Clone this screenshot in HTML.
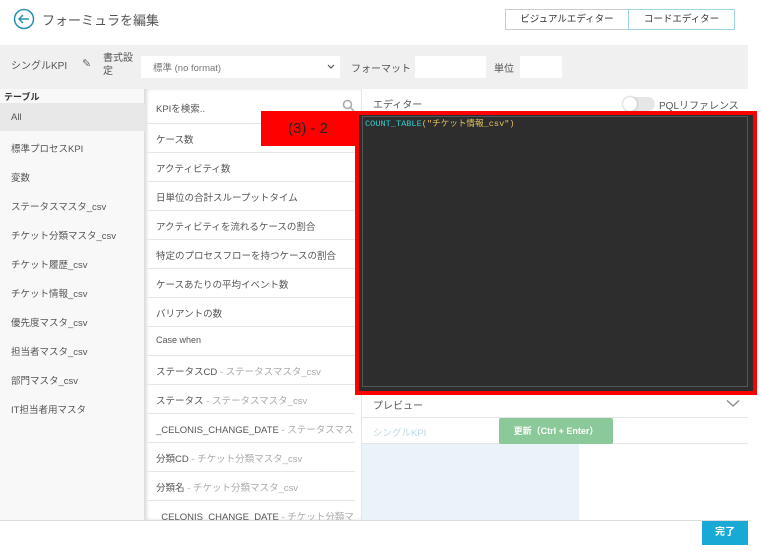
<!DOCTYPE html>
<html><head><meta charset="utf-8"><style>
*{box-sizing:border-box;margin:0;padding:0}
body{width:761px;height:553px;background:#fff;font-family:"Liberation Sans","Noto Sans CJK JP",sans-serif;color:#555;position:relative;overflow:hidden;font-size:10px}
.a{position:absolute}
.li{position:absolute;left:11px;font-size:9.5px;color:#555}
.mr{position:absolute;left:145px;width:210px;height:29px;border-bottom:1px solid #e6e6e6;padding:8px 0 0 11px;font-size:9.5px;color:#555;white-space:nowrap;overflow:hidden}
.mr span{color:#aaa}
</style></head><body>
<svg class="a" style="left:13px;top:8px" width="22" height="22" viewBox="0 0 22 22"><circle cx="11" cy="11" r="9.5" fill="none" stroke="#2a8fb0" stroke-width="1.5"/><path d="M16 11H6M10 7L6 11L10 15" fill="none" stroke="#2a8fb0" stroke-width="1.5"/></svg>
<div class="a" style="left:42px;top:10px;font-size:13px;color:#555">フォーミュラを編集</div>
<div class="a" style="left:505px;top:9px;width:124px;height:21px;border:1px solid #ccc;font-size:9.5px;color:#333;text-align:center;line-height:19px">ビジュアルエディター</div>
<div class="a" style="left:628px;top:9px;width:107px;height:21px;border:1px solid #9fd3e3;font-size:9.5px;color:#333;text-align:center;line-height:19px">コードエディター</div>
<div class="a" style="left:0;top:45px;width:748px;height:44px;background:#f0f0f0"></div>
<div class="a" style="left:11px;top:57px;font-size:10px">シングルKPI</div>
<div class="a" style="left:82px;top:57px;font-size:11px;color:#666">✎</div>
<div class="a" style="left:103px;top:52px;font-size:10px;line-height:13px">書式設<br>定</div>
<div class="a" style="left:141px;top:56px;width:199px;height:22px;background:#fff;padding:4px 12px;font-size:9.5px;color:#777">標準 (no format)<svg style="position:absolute;right:5px;top:8px" width="8" height="6"><path d="M1 1L4 4L7 1" fill="none" stroke="#555" stroke-width="1.2"/></svg></div>
<div class="a" style="left:351px;top:60px;font-size:10px">フォーマット</div>
<div class="a" style="left:415px;top:56px;width:71px;height:22px;background:#fff"></div>
<div class="a" style="left:494px;top:60px;font-size:10px">単位</div>
<div class="a" style="left:520px;top:56px;width:42px;height:22px;background:#fff"></div>
<div class="a" style="left:0;top:89px;width:145px;height:431px;background:#f8f8f8;border-right:1px solid #ddd"></div>
<div class="a" style="left:4px;top:90px;font-size:9px;font-weight:bold;color:#333">テーブル</div>
<div class="a" style="left:0;top:103px;width:145px;height:28px;background:#e8e8e8"></div>
<div class="li" style="top:112px">All</div>
<div class="li" style="top:141px">標準プロセスKPI</div>
<div class="li" style="top:170px">変数</div>
<div class="li" style="top:199px">ステータスマスタ_csv</div>
<div class="li" style="top:228px">チケット分類マスタ_csv</div>
<div class="li" style="top:257px">チケット履歴_csv</div>
<div class="li" style="top:286px">チケット情報_csv</div>
<div class="li" style="top:315px">優先度マスタ_csv</div>
<div class="li" style="top:344px">担当者マスタ_csv</div>
<div class="li" style="top:373px">部門マスタ_csv</div>
<div class="li" style="top:402px">IT担当者用マスタ</div>
<div class="a" style="left:145px;top:89px;width:217px;height:431px;border-right:1px solid #e6e6e6;box-shadow:inset 2px 0 3px #ddd"></div>
<div class="mr" style="top:89px;height:35px;padding-top:12px">KPIを検索..<svg style="position:absolute;right:0;top:10px" width="13" height="13"><circle cx="5.5" cy="5.5" r="4" fill="none" stroke="#aaa" stroke-width="1.5"/><path d="M8.5 8.5L12 12" stroke="#aaa" stroke-width="1.5"/></svg></div>
<div class="mr" style="top:124px">ケース数</div>
<div class="mr" style="top:153px">アクティビティ数</div>
<div class="mr" style="top:182px">日単位の合計スループットタイム</div>
<div class="mr" style="top:211px">アクティビティを流れるケースの割合</div>
<div class="mr" style="top:240px">特定のプロセスフローを持つケースの割合</div>
<div class="mr" style="top:269px">ケースあたりの平均イベント数</div>
<div class="mr" style="top:298px">バリアントの数</div>
<div class="mr" style="top:327px;font-size:9px">Case when</div>
<div class="mr" style="top:356px">ステータスCD <span>- ステータスマスタ_csv</span></div>
<div class="mr" style="top:385px">ステータス <span>- ステータスマスタ_csv</span></div>
<div class="mr" style="top:414px">_CELONIS_CHANGE_DATE <span>- ステータスマスタ_csv</span></div>
<div class="mr" style="top:443px">分類CD <span>- チケット分類マスタ_csv</span></div>
<div class="mr" style="top:472px">分類名 <span>- チケット分類マスタ_csv</span></div>
<div class="mr" style="top:501px;height:19px;border:0">_CELONIS_CHANGE_DATE <span>- チケット分類マスタ_csv</span></div>
<div class="a" style="left:373px;top:96px;font-size:10px">エディター</div>
<div class="a" style="left:623px;top:97px;width:32px;height:14px;border-radius:7px;background:#e6e6e6"></div>
<div class="a" style="left:623px;top:97px;width:14px;height:14px;border-radius:7px;background:#fff;box-shadow:0 0 2px #999"></div>
<div class="a" style="left:659px;top:97px;font-size:10px">PQLリファレンス</div>
<div class="a" style="left:355px;top:111px;width:402px;height:284px;border:4px solid #f00;background:#2d2d2d"></div>
<div class="a" style="left:362px;top:116px;width:386px;height:271px;background:#2d2d2d;border:1px solid #555"></div>
<div class="a" style="left:365px;top:117px;font-family:'Liberation Mono','Noto Sans CJK JP',monospace;font-size:8.6px;color:#3cc;white-space:nowrap">COUNT_TABLE<span style="color:#e6c35c">("チケット情報_csv")</span></div>
<div class="a" style="left:261px;top:111px;width:94px;height:35px;background:#f00;color:#222;font-size:15px;text-align:center;line-height:35px">(3) - 2</div>
<div class="a" style="left:373px;top:397px;font-size:10px">プレビュー</div>
<svg class="a" style="left:726px;top:399px" width="14" height="9"><path d="M1 1.5L7 7L13 1.5" fill="none" stroke="#888" stroke-width="1.3"/></svg>
<div class="a" style="left:362px;top:417px;width:386px;height:1px;background:#e6e6e6"></div>
<div class="a" style="left:373px;top:425px;font-size:9.5px;color:#bcd8e4">シングルKPI</div>
<div class="a" style="left:362px;top:443px;width:386px;height:1px;background:#e6e6e6"></div>
<div class="a" style="left:362px;top:444px;width:217px;height:76px;background:#eaf4f8"></div>
<div class="a" style="left:499px;top:418px;width:114px;height:26px;background:#8bc99a;border-radius:2px;color:#fff;font-size:9px;font-weight:bold;text-align:center;line-height:26px">更新（Ctrl + Enter）</div>
<div class="a" style="left:0;top:520px;width:748px;height:1px;background:#ddd"></div>
<div class="a" style="left:702px;top:521px;width:46px;height:24px;background:#19a9d5;color:#fff;font-size:10px;font-weight:bold;text-align:center;line-height:24px">完了</div>
</body></html>
